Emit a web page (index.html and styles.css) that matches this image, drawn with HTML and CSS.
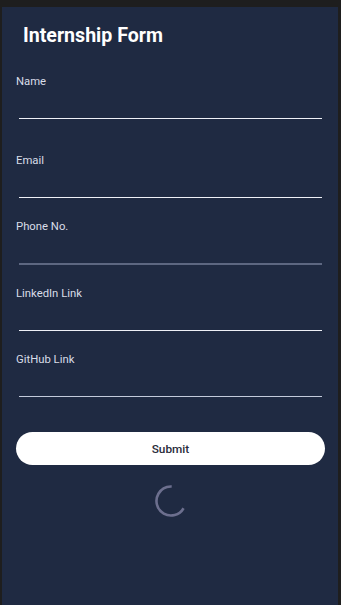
FILE: index.html
```html
<!DOCTYPE html>
<html lang="en">
<head>
    <meta charset="UTF-8">
    <meta name="viewport" content="width=device-width, initial-scale=1.0">
    <title>Internship Form</title>
    <link rel="stylesheet" href="styles.css">
</head>
<body>
    <div class="panel">
        <h1 class="title">Internship Form</h1>
        <form class="form" onsubmit="return false;">
            <div class="field field-first">
                <label for="name">Name</label>
                <input type="text" id="name" name="name">
            </div>
            <div class="field">
                <label for="email">Email</label>
                <input type="email" id="email" name="email">
            </div>
            <div class="field">
                <label for="phone">Phone No.</label>
                <input type="tel" id="phone" name="phone" class="dim">
            </div>
            <div class="field">
                <label for="linkedin">LinkedIn Link</label>
                <input type="text" id="linkedin" name="linkedin">
            </div>
            <div class="field">
                <label for="github">GitHub Link</label>
                <input type="text" id="github" name="github" class="soft">
            </div>
            <button type="submit" class="submit">Submit</button>
        </form>
        <div class="loader">
            <svg width="34" height="34" viewBox="0 0 34 34">
                <circle cx="17" cy="17" r="14.5" fill="none" stroke="#6c6f8e" stroke-width="2.6"
                        stroke-dasharray="61 100" transform="rotate(30 17 17)"/>
            </svg>
        </div>
    </div>
</body>
</html>
```

FILE: styles.css
```css
html, body {
    height: 100%;
}
body {
    margin: 0;
    padding: 0;
    background-color: #1e1e1e;
    font-family: Roboto, 'Noto Sans', sans-serif;
    color: white;
}
.panel {
    box-sizing: border-box;
    margin: 7px 3px 0 2px;
    min-height: calc(100% - 7px);
    padding: 17px 13px 0 14px;
    background-color: #1f2a42;
}
.title {
    margin: 0 0 27px 7px;
    font-size: 19.6px;
    line-height: 24px;
    font-weight: 700;
}
.form {
    display: flex;
    flex-direction: column;
}
.field {
    display: flex;
    flex-direction: column;
    margin-bottom: 22px;
}
.field-first {
    margin-bottom: 35px;
}
.field label {
    font-size: 11.3px;
    line-height: 14px;
    color: #d9dde8;
}
.field input {
    box-sizing: border-box;
    height: 30px;
    margin: 0 3px;
    padding: 0;
    background: transparent;
    border: none;
    border-bottom: 1.5px solid #eef0f6;
    color: white;
    font: inherit;
    outline: none;
}
.field input.dim {
    height: 31px;
    border-bottom: 2px solid #5d6781;
}
.field input.soft {
    border-bottom-color: #c3cadb;
}
.submit {
    margin-top: 13px;
    height: 33px;
    border: none;
    border-radius: 17px;
    background-color: white;
    color: #2a2c3b;
    font-family: Roboto, sans-serif;
    font-size: 11.8px;
    font-weight: 500;
    cursor: pointer;
}
.loader {
    display: flex;
    justify-content: center;
    margin-top: 19px;
}
```
